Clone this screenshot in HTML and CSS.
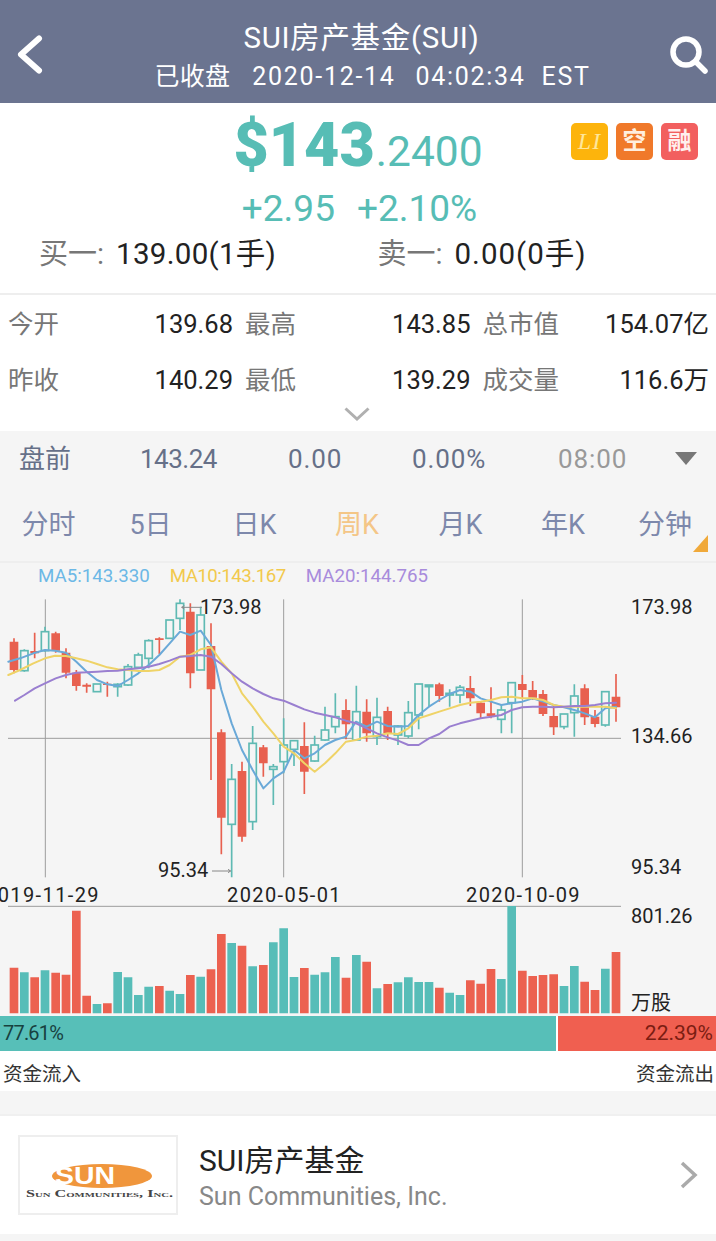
FILE: index.html
```html
<!DOCTYPE html>
<html lang="zh">
<head>
<meta charset="utf-8">
<title>SUI房产基金(SUI)</title>
<link rel="stylesheet" href="styles.css">
</head>
<body>
<div class="page">
  <header class="topbar">
    <svg class="back" viewBox="0 0 30 44"><path d="M23 8.5 5 24.5l18 16"/></svg>
    <div class="titles">
      <div class="title">SUI房产基金(SUI)</div>
      <div class="subtitle"><span class="cn">已收盘</span><span>2020-12-14</span><span class="clock">04:02:34</span><span>EST</span></div>
    </div>
    <svg class="search" viewBox="0 0 40 42"><circle cx="17" cy="18" r="13"/><path d="M26.5 27.5 36 37"/></svg>
  </header>

  <section class="quote">
    <div class="price"><b>$143</b><span>.2400</span></div>
    <div class="badges">
      <span class="badge li">LI</span><span class="badge kong">空</span><span class="badge rong">融</span>
    </div>
    <div class="change"><span>+2.95</span><span>+2.10%</span></div>
    <div class="bidask">
      <div><em>买一:</em>139.00(1手)</div>
      <div><em>卖一:</em>0.00(0手)</div>
    </div>
  </section>

  <section class="stats">
    <div class="cell"><em>今开</em><span>139.68</span></div>
    <div class="cell"><em>最高</em><span>143.85</span></div>
    <div class="cell"><em>总市值</em><span>154.07亿</span></div>
    <div class="cell"><em>昨收</em><span>140.29</span></div>
    <div class="cell"><em>最低</em><span>139.29</span></div>
    <div class="cell"><em>成交量</em><span>116.6万</span></div>
  </section>
  <div class="expand"><svg viewBox="0 0 26 14"><path d="M1.5 1.5 13 12 24.5 1.5"/></svg></div>

  <section class="premarket">
    <span class="pm-label">盘前</span>
    <span class="pm-first">143.24</span>
    <span>0.00</span>
    <span>0.00%</span>
    <span class="pm-time">08:00</span>
    <i class="pm-arrow"></i>
  </section>

  <nav class="tabs">
    <a>分时</a><a>5日</a><a>日K</a><a class="on">周K</a><a>月K</a><a>年K</a><a>分钟</a>
  </nav>

  <section class="chart">
    <div class="ma">
      <span class="ma5">MA5:143.330</span><span class="ma10">MA10:143.167</span><span class="ma20">MA20:144.765</span>
    </div>
    <div class="plot">
      <svg class="plot-svg" viewBox="0 0 2148 1275">
        <path class="grid" d="M136 28V862M851 28V862M1567 28V862M24 445H1863M24 949H1863"/>
        <g class="red">
          <path class="wick" d="M42 145V250M104 128V205M167 125V188M198 175V265M229 240V302M260 280V308M322 275V320M478 142V192M571 40V295M633 100V570M664 418V793M726 515V755M790 465V560M913 397V612M1038 328V448"/>
          <path class="body" d="M42 155V240M104 183V190M167 130V182M198 188V248M229 248V288M260 284V290M322 281V285M478 145V150M571 65V250M633 168V298M664 427V683M726 543V740M790 472V520M913 468V545M1038 360V403"/>
        </g>
        <g class="red" transform="translate(1068 0)">
          <path class="wick" d="M32 328V455M95 350V450M250 278V335M343 258V348M374 335V385M405 292V385M499 255V325M530 273V330M561 300V378M593 345V435M686 283V405M717 360V412M780 252V395"/>
          <path class="body" d="M32 365V430M95 363V430M250 283V318M343 294V325M374 338V370M405 370V378M499 282V300M530 300V323M561 312V372M593 378V412M686 295V382M717 380V402M780 320V352"/>
        </g>
        <g class="teal">
          <path class="wick" d="M73 178V245M135 110V185M353 280V320M384 222V288M415 188V235M446 148V235M540 28V120M602 50V240M695 522V862M758 408V720M820 522V645M851 385V550M882 450V528M944 437V515M975 350V452M1006 310V430M1069 287V450"/>
          <rect x="62" y="182" width="22" height="60"/><rect x="124" y="125" width="22" height="57"/><rect x="280" y="282" width="22" height="23"/><rect x="342" y="283" width="22" height="7"/><rect x="373" y="230" width="22" height="55"/><rect x="404" y="195" width="22" height="37"/><rect x="435" y="152" width="22" height="53"/><rect x="498" y="90" width="22" height="55"/><rect x="529" y="40" width="22" height="45"/><rect x="591" y="75" width="22" height="165"/><rect x="684" y="568" width="22" height="135"/><rect x="747" y="460" width="22" height="235"/><rect x="809" y="530" width="22" height="8"/><rect x="840" y="465" width="22" height="50"/><rect x="871" y="452" width="22" height="26"/><rect x="933" y="465" width="22" height="48"/><rect x="964" y="420" width="22" height="30"/><rect x="995" y="380" width="22" height="30"/><rect x="1058" y="365" width="22" height="85"/>
        </g>
        <g class="teal" transform="translate(1068 0)">
          <path class="wick" d="M63 323V465M126 405V465M157 333V445M188 282V418M219 285V350M281 298V350M312 285V340M436 342V430M467 278V430M624 372V418M655 283V440M748 305V410"/>
          <rect x="52" y="382" width="22" height="58"/><rect x="115" y="408" width="22" height="27"/><rect x="146" y="368" width="22" height="70"/><rect x="177" y="282" width="22" height="93"/><rect x="208" y="285" width="22" height="5"/><rect x="270" y="310" width="22" height="5"/><rect x="301" y="292" width="22" height="23"/><rect x="425" y="360" width="22" height="28"/><rect x="456" y="278" width="22" height="60"/><rect x="613" y="372" width="22" height="38"/><rect x="644" y="318" width="22" height="50"/><rect x="737" y="305" width="22" height="100"/>
        </g>
        <polyline class="line-blue" points="25,215 60,205 100,190 135,180 165,182 198,188 229,215 260,245 291,270 322,283 353,288 384,270 415,250 446,225 478,195 509,160 540,125 571,135 602,122 633,165 664,300 695,400 726,480 758,540 790,595 820,565 851,545 882,480 913,505 944,490 975,465 1006,450 1038,440 1068,395 1100,410 1131,395 1163,408 1194,410 1225,408 1256,375 1287,350 1318,330 1349,312 1380,300 1411,305 1442,325 1473,335 1504,345 1535,340 1567,335 1598,325 1629,335 1661,345 1692,352 1723,360 1754,370 1785,382 1816,355 1848,350"/>
        <polyline class="line-yellow" points="25,255 60,240 100,220 135,205 165,197 198,198 229,205 260,212 291,222 322,232 353,238 384,240 415,243 446,243 478,240 509,225 540,200 571,195 602,178 633,172 664,215 695,250 726,310 758,350 790,395 820,430 851,470 882,490 913,520 944,545 975,520 1006,490 1038,455 1068,450 1100,440 1131,437 1163,430 1194,432 1225,415 1256,385 1287,375 1318,365 1349,355 1380,345 1411,338 1442,335 1473,330 1504,322 1535,320 1567,325 1598,325 1629,330 1661,345 1692,350 1723,350 1754,350 1785,350 1816,350 1848,355"/>
        <polyline class="line-purple" points="45,332 73,315 104,295 135,280 167,265 198,255 229,248 260,247 291,245 322,243 353,242 384,238 415,235 446,230 478,222 509,212 540,200 571,198 602,195 633,200 664,222 695,250 726,275 758,295 790,312 820,325 851,332 882,345 913,358 944,368 975,375 1006,382 1038,392 1068,400 1100,415 1131,430 1163,442 1194,452 1225,465 1256,465 1287,445 1318,432 1349,410 1380,400 1411,392 1442,385 1473,380 1504,375 1535,360 1567,352 1598,350 1629,350 1661,352 1692,350 1723,348 1754,348 1785,345 1816,340 1848,338"/>
        <path class="pointer" d="M545 52H606M553 47l-8 5 8 5M636 843H692M684 838l8 5-8 5"/>
        <g transform="translate(0 930)">
          <path class="bar-red" d="M42 203V340M104 232V340M167 218V340M198 224V340M229 32V340M260 287V340M322 310V340M478 258V340M571 225V340M633 208V340M664 102V340M726 137V340M790 195V340M913 204V340M1038 233V340"/>
          <path class="bar-teal" d="M73 217V340M135 211V340M291 312V340M353 216V340M384 232V340M415 285V340M446 260V340M509 272V340M540 282V340M602 230V340M695 129V340M758 199V340M820 127V340M851 85V340M882 231V340M944 224V340M975 217V340M1006 171V340M1069 165V340"/>
        </g>
        <g transform="translate(1068 930)">
          <path class="bar-red" d="M32 185V340M95 252V340M250 263V340M343 241V340M374 251V340M405 207V340M499 212V340M530 228V340M561 225V340M593 223V340M686 245V340M717 270V340M780 156V340"/>
          <path class="bar-teal" d="M63 265V340M126 247V340M157 232V340M188 246V340M219 246V340M281 278V340M312 285V340M436 237V340M467 18V340M624 258V340M655 198V340M748 206V340"/>
        </g>
      </svg>
      <span class="tag tag-hi">173.98</span>
      <span class="tag tag-lo">95.34</span>
      <span class="tag axis a1">173.98</span>
      <span class="tag axis a2">134.66</span>
      <span class="tag axis a3">95.34</span>
      <span class="tag axis a4">801.26</span>
      <span class="tag axis a5">万股</span>
      <span class="tag date d1">2019-11-29</span>
      <span class="tag date d2">2020-05-01</span>
      <span class="tag date d3">2020-10-09</span>
    </div>
  </section>

  <section class="flow">
    <div class="flow-bar">
      <div class="flow-in">77.61%</div>
      <div class="flow-out">22.39%</div>
    </div>
    <div class="flow-labels"><span>资金流入</span><span>资金流出</span></div>
  </section>

  <section class="company">
    <div class="logo">
      <svg viewBox="0 0 156 76">
        <ellipse class="logo-sun" cx="82" cy="39" rx="50" ry="12"/>
        <text class="logo-word" x="35" y="47" textLength="60" lengthAdjust="spacingAndGlyphs">SUN</text>
        <text class="logo-name" x="6" y="60" textLength="147" lengthAdjust="spacingAndGlyphs">Sun Communities, Inc.</text>
      </svg>
    </div>
    <div class="company-text">
      <div class="company-cn">SUI房产基金</div>
      <div class="company-en">Sun Communities, Inc.</div>
    </div>
    <svg class="go" viewBox="0 0 18 28"><path d="M2 2l13 12L2 26"/></svg>
  </section>
  <div class="foot"></div>
</div>
</body>
</html>
```
FILE: styles.css
```css
* { box-sizing: border-box; }
html, body { margin: 0; padding: 0; background: #fff; }
body { font-family: Roboto, "Noto Sans CJK SC", sans-serif; color: #222; }
.page { width: 716px; height: 1241px; overflow: hidden; }
em { font-style: normal; }

.topbar { height: 103px; background: #6b7490; color: #fff; display: flex; align-items: center; position: relative; }
.titles { flex: 1; text-align: center; padding: 7px 0 0 8px; }
.title { font-size: 29.5px; line-height: 36px; margin-top: 2px; letter-spacing: 0.7px; }
.subtitle { font-size: 25px; line-height: 32px; margin: 5px 0 0 22px; display: flex; justify-content: center; gap: 20px; letter-spacing: 1.7px; }
.subtitle .cn { letter-spacing: 0.3px; margin-right: 2px; }
.subtitle .clock { margin-right: -4px; }
.back { width: 30px; height: 44px; margin-left: 16px; fill: none; stroke: #fff; stroke-width: 6; stroke-linecap: round; stroke-linejoin: round; }
.search { width: 40px; height: 42px; margin: 7px 7px 0 0; fill: none; stroke: #fff; stroke-width: 5.5; stroke-linecap: round; }

.quote { height: 190px; position: relative; text-align: center; }
.price { height: 77px; padding-top: 8px; color: #57bdb5; line-height: 68px; }
.price b { font-size: 61px; font-weight: 900; }
.price span { font-size: 42.5px; margin-left: 1px; }
.badges { position: absolute; right: 18px; top: 20px; display: flex; gap: 8px; }
.badge { width: 37px; height: 37px; border-radius: 5px; color: #fff; font-size: 24px; line-height: 36px; text-align: center; }
.li { background: #fdb40c; font-family: "Liberation Serif", serif; font-style: italic; color: #ffe69a; letter-spacing: 1px; }
.kong { background: #f0792a; color: #ffeede; font-weight: 700; }
.rong { background: #f25f5f; font-weight: 700; color: #fff0ee; }
.change { display: flex; justify-content: center; gap: 22px; padding-left: 3px; font-size: 37px; line-height: 50px; color: #57bdb5; margin-top: 4px; }
.bidask { display: flex; padding-left: 39px; font-size: 29.5px; line-height: 42px; margin-top: -1px; text-align: left; letter-spacing: 0.3px; }
.bidask div { width: 341px; }
.bidask div + div { letter-spacing: 1px; }
.bidask em { color: #777; font-size: 29px; letter-spacing: 0; margin-right: 12px; }

.stats { border-top: 2px solid #eee; display: grid; grid-template-columns: 225px 225.5px 226.5px; column-gap: 12px; padding: 1px 0 0 8px; grid-auto-rows: 56px; font-size: 25.5px; line-height: 56px; }
.cell { display: flex; justify-content: space-between; align-items: baseline; }
.cell em { color: #777; }
.expand { height: 23px; display: flex; justify-content: center; padding-right: 2px; }
.expand svg { width: 26px; height: 14px; margin-top: -1px; fill: none; stroke: #b0b0b0; stroke-width: 3; }

.premarket { height: 56px; background: #f5f5f5; display: grid; grid-template-columns: 121px 148px 124px 146px 117px 22px; align-items: center; padding-left: 19px; font-size: 26px; letter-spacing: 0.9px; color: #667088; }
.pm-label { letter-spacing: 0; margin-bottom: 5px; }
.pm-first { letter-spacing: -0.5px; }
.pm-time { color: #999; }
.pm-arrow { width: 0; height: 0; border: 11px solid transparent; border-top: 13px solid #777; border-bottom: 0; margin-bottom: 2px; }

.tabs { height: 76px; padding-bottom: 4px; background: #f5f5f5; display: grid; grid-template-columns: 97px 107px 101px 104px 103px 102px 102px; align-items: center; text-align: center; font-size: 27px; color: #7d88ab; border-bottom: 2px solid #eee; position: relative; }
.tabs .on { color: #f4c687; }
.tabs::after { content: ""; position: absolute; right: 8px; bottom: 9px; border-style: solid; border-width: 0 0 17px 15px; border-color: transparent transparent #f0a93a transparent; }

.chart { background: #f5f5f5; }
.ma { height: 27px; display: flex; gap: 20px; padding-left: 38px; font-size: 18.7px; line-height: 26px; }
.ma5 { color: #6cb8e6; }
.ma10 { color: #f2c94c; letter-spacing: -0.5px; }
.ma20 { color: #a88bdc; }
.plot { position: relative; height: 426px; }
.plot-svg { width: 716px; height: 425px; display: block; }
.grid { stroke: #9d9d9d; stroke-width: 3; fill: none; }
.wick { fill: none; stroke-width: 5; }
.red .wick { stroke: #e8604f; }
.teal .wick { stroke: #5fbab3; }
.red .body { fill: none; stroke: #e8604f; stroke-width: 26; }
.teal rect { fill: #f5f5f5; stroke: #5fbab3; stroke-width: 5; }
polyline { fill: none; stroke-width: 6; stroke-linejoin: round; stroke-linecap: round; }
.line-blue { stroke: #6aa9d8; }
.line-yellow { stroke: #efd367; }
.line-purple { stroke: #9a7fd0; }
.pointer { stroke: #888; stroke-width: 3; fill: none; }
.bar-red { fill: none; stroke: #ec6150; stroke-width: 26; }
.bar-teal { fill: none; stroke: #57bdb8; stroke-width: 26; }
.tag { position: absolute; font-size: 20px; line-height: 24px; color: #222; white-space: nowrap; }
.tag-hi { left: 200px; top: 5px; }
.tag-lo { left: 158px; top: 268px; }
.a1 { left: 631px; top: 5px; }
.a2 { left: 631px; top: 134px; }
.a3 { left: 631px; top: 265px; }
.a4 { left: 631px; top: 314px; }
.a5 { left: 631px; top: 401px; }
.date { top: 293px; letter-spacing: 1.4px; }
.d1 { left: -15px; }
.d2 { left: 227px; }
.d3 { left: 466px; }

.flow { background: #fff; }
.flow-bar { display: flex; gap: 2px; height: 35px; font-size: 20px; line-height: 35px; }
.flow-in { width: 556px; background: #57bfb8; color: #17413f; padding-left: 3px; letter-spacing: -0.8px; }
.flow-out { flex: 1; background: #f05f50; color: #7b1d12; text-align: right; padding-right: 3px; font-size: 21px; }
.flow-labels { height: 40px; display: flex; justify-content: space-between; padding: 0 2px 0 3px; font-size: 19.5px; line-height: 47px; color: #333; }

.company { margin-top: 23px; border-top: 2px solid #f0f0f0; height: 120px; background: #fff; display: flex; align-items: center; position: relative; box-shadow: 0 -23px 0 #f5f5f5; }
.logo { width: 160px; height: 80px; margin-left: 18px; border: 2px solid #eee; }
.logo svg { display: block; width: 156px; height: 76px; }
.logo-sun { fill: #f0963c; }
.logo-word { font-family: "Liberation Sans", sans-serif; font-weight: 700; font-size: 23px; fill: #fff; }
.logo-name { font-family: "Liberation Serif", serif; font-weight: 700; font-size: 10.5px; font-variant: small-caps; fill: #444; }
.company-text { margin-left: 21px; flex: 1; padding-top: 4px; }
.company-cn { font-size: 30px; line-height: 40px; }
.company-en { font-size: 25px; line-height: 32px; color: #888; }
.go { width: 18px; height: 28px; margin-right: 18px; fill: none; stroke: #aaa; stroke-width: 3.5; }
.foot { height: 7px; background: #f5f5f5; }
```
